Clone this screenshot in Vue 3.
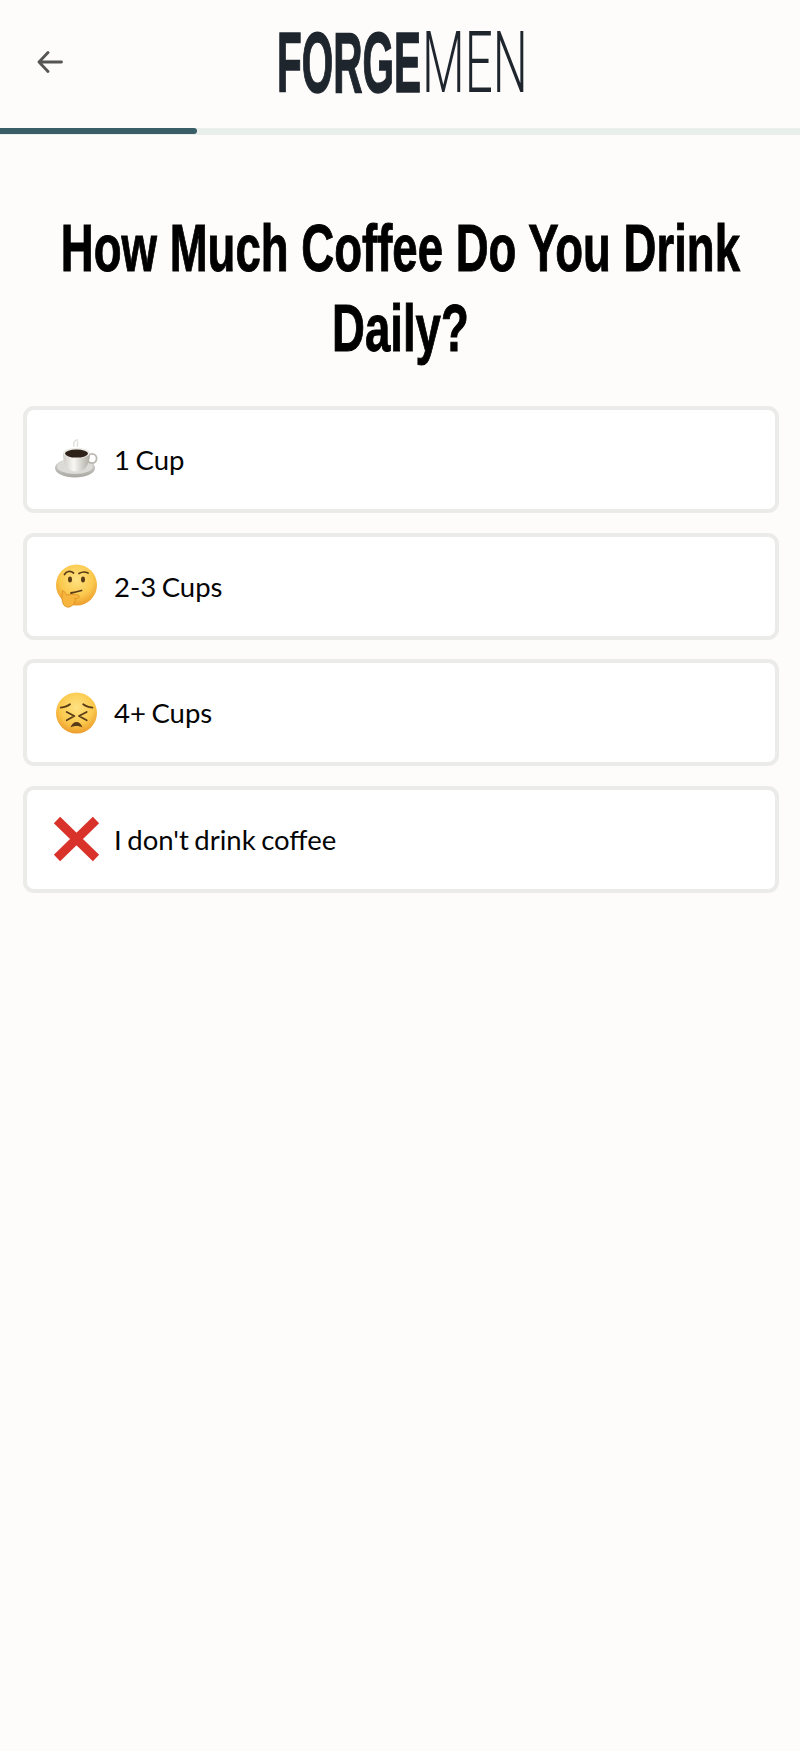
<template>
  <div class="page">
    <header class="top">
      <button class="back" aria-label="Back">
        <svg width="26" height="22" viewBox="0 0 26 22" fill="none" stroke="#555" stroke-width="2.8" stroke-linecap="round" stroke-linejoin="round">
          <path d="M24.5 11H2M11 1.5 2 11l9 9.5" />
        </svg>
      </button>
      <div class="logo">
        <div class="logo-part forge-box"><span class="forge">FORGE</span></div>
        <div class="logo-part men-box"><span class="men">MEN</span></div>
      </div>
    </header>

    <div class="progress"><div class="fill" :style="{ width: progress + 'px' }"></div></div>

    <div class="title-wrap">
      <h1 class="title">How Much Coffee Do You Drink<br />Daily?</h1>
    </div>

    <div class="options">
      <div v-for="opt in options" :key="opt.id" class="option">
        <svg class="emoji" width="48" height="48" viewBox="0 0 48 48" fill="none">
          <defs>
            <radialGradient :id="'face-' + opt.id" cx="50%" cy="36%" r="64%">
              <stop offset="0" stop-color="#fee283" />
              <stop offset="0.62" stop-color="#fbca4f" />
              <stop offset="1" stop-color="#ec9c2b" />
            </radialGradient>
            <linearGradient :id="'cup-' + opt.id" x1="0" y1="0" x2="1" y2="0">
              <stop offset="0" stop-color="#cfccc5" />
              <stop offset="0.4" stop-color="#f8f7f3" />
              <stop offset="1" stop-color="#aeaba4" />
            </linearGradient>
            <linearGradient :id="'plate-' + opt.id" x1="0" y1="0" x2="0" y2="1">
              <stop offset="0" stop-color="#d8d7d3" />
              <stop offset="1" stop-color="#a9a8a3" />
            </linearGradient>
          </defs>

          <template v-if="opt.id === 'one'">
            <path d="M22 10c-1.500-1.500 1-2.500 0-4M25.500 10c-1-1.500 1-2.500 0-4M23 5c.5-.8 1.500-1 2.500-1" stroke="#e0e0dd" stroke-width="1.500" stroke-linecap="round" />
            <ellipse cx="23" cy="32" rx="20" ry="9.500" :fill="'url(#plate-' + opt.id + ')'" />
            <ellipse cx="23" cy="30.500" rx="18" ry="7.500" fill="#dcdbd7" />
            <circle cx="40" cy="22.500" r="4.600" stroke="#b9b7b0" stroke-width="1.800" />
            <path d="M11 17c0 8 2 13 5.500 16.500 4 2.600 11 2.600 15.500 0C35.500 30 38 25 38 17Z" :fill="'url(#cup-' + opt.id + ')'" />
            <ellipse cx="24.500" cy="17" rx="13.500" ry="5.200" fill="#eeece7" />
            <ellipse cx="24.500" cy="17.600" rx="11.500" ry="4" fill="#2e2119" />
          </template>

          <template v-else-if="opt.id === 'two'">
            <circle cx="24.500" cy="23" r="20.500" :fill="'url(#face-' + opt.id + ')'" />
            <ellipse cx="18" cy="17.500" rx="2" ry="3" fill="#5a3b17" />
            <ellipse cx="31" cy="17.500" rx="2" ry="3" fill="#5a3b17" />
            <path d="M12.500 12.500c2-3.500 6-4 9-1.500M27 11.500c2.500-1.500 6-2 9-.5" stroke="#5a3b17" stroke-width="1.700" stroke-linecap="round" />
            <path d="M19 31c3-.5 7-1.500 10.500-2.500" stroke="#5a3b17" stroke-width="1.800" stroke-linecap="round" />
            <path d="M10.500 29c2 0 3 2 4 4 3-.5 8-1 11.500 0 2 .5 2 3-.5 3.300l-3 .3c2 .8 1.300 3-.5 3.200.8 1.500 0 3-1.500 3.200-1 2-4.500 2.800-7 1.500-3-1.500-3.500-6-3.500-9 0-2 .5-4.500.5-7Z" fill="#f7b53e" stroke="#d98f24" stroke-width=".8" />
          </template>

          <template v-else-if="opt.id === 'three'">
            <circle cx="24.500" cy="24" r="20.500" :fill="'url(#face-' + opt.id + ')'" />
            <g stroke="#5a3b17" stroke-width="1.800" stroke-linecap="round" stroke-linejoin="round">
              <path d="M8.700 18.700c3.500-.5 7-1.500 9.300-3.400M40.500 18.700c-3.500-.5-7-1.500-9.300-3.400" />
              <path d="M14.700 23l7.600 4-7.600 4.300M34.700 23L27 27l7.700 4.300" />
            </g>
            <path d="M18.500 38.500c1-3.500 3.500-5.500 6-5.500s5 2 6 5.500c-3.500-2-8.500-2-12 0Z" fill="#5a3b17" />
          </template>

          <template v-else>
            <path d="M5 5l39 38M44 5 5 43" stroke="#d9322a" stroke-width="9" />
          </template>
        </svg>
        <span class="label">{{ opt.label }}</span>
      </div>
    </div>
  </div>
</template>

<script setup>
const progress = 197

const options = [
  { id: 'one', label: '1 Cup' },
  { id: 'two', label: '2-3 Cups' },
  { id: 'three', label: '4+ Cups' },
  { id: 'none', label: "I don't drink coffee" }
]
</script>

<style>
html, body {
  margin: 0;
  background: #fdfcfa;
}
</style>

<style scoped>
.page {
  min-height: 1751px;
  background: #fdfcfa;
  overflow: hidden;
}
.top {
  position: relative;
  height: 128px;
  display: flex;
  align-items: flex-start;
  justify-content: center;
  padding-top: 13px;
  box-sizing: border-box;
}
.back {
  position: absolute;
  left: 37px;
  top: 51px;
  padding: 0;
  border: none;
  background: none;
  line-height: 0;
}
.logo {
  display: flex;
  align-items: baseline;
  margin-left: 5px;
  height: 100px;
  font-size: 85px;
  line-height: 100px;
  color: #1e252d;
}
.logo-part {
  flex: none;
  white-space: nowrap;
}
.forge-box {
  width: 145px;
}
.men-box {
  width: 106px;
}
.forge,
.men {
  display: inline-block;
  transform-origin: left center;
}
.forge {
  font-family: "Liberation Sans", sans-serif;
  font-weight: 700;
  transform: scaleX(0.477);
  -webkit-text-stroke: 1.5px #1e252d;
}
.men {
  font-family: "Roboto", sans-serif;
  font-weight: 300;
  transform: scaleX(0.58);
}
.progress {
  height: 7px;
  background: #e9f0ec;
}
.fill {
  height: 6px;
  background: #3a5e66;
  border-radius: 0 3px 3px 0;
}
.title-wrap {
  display: flex;
  justify-content: center;
  padding-top: 73px;
}
.title {
  flex: none;
  margin: 0;
  font-family: "Liberation Sans", sans-serif;
  font-weight: 700;
  font-size: 67px;
  line-height: 80px;
  text-align: center;
  white-space: nowrap;
  color: #000;
  transform: scaleX(0.68);
  -webkit-text-stroke: 1px #000;
}
.options {
  display: flex;
  flex-direction: column;
  gap: 19.5px;
  padding: 38px 21px 0 23px;
}
.option {
  height: 107px;
  box-sizing: border-box;
  display: flex;
  align-items: center;
  gap: 14px;
  padding-left: 25px;
  background: #fff;
  border: 4px solid #ebebe9;
  border-radius: 11px;
}
.emoji {
  flex: none;
}
.label {
  font-family: "Lato", sans-serif;
  font-size: 27.5px;
  word-spacing: -1.5px;
  color: #050505;
}
</style>
